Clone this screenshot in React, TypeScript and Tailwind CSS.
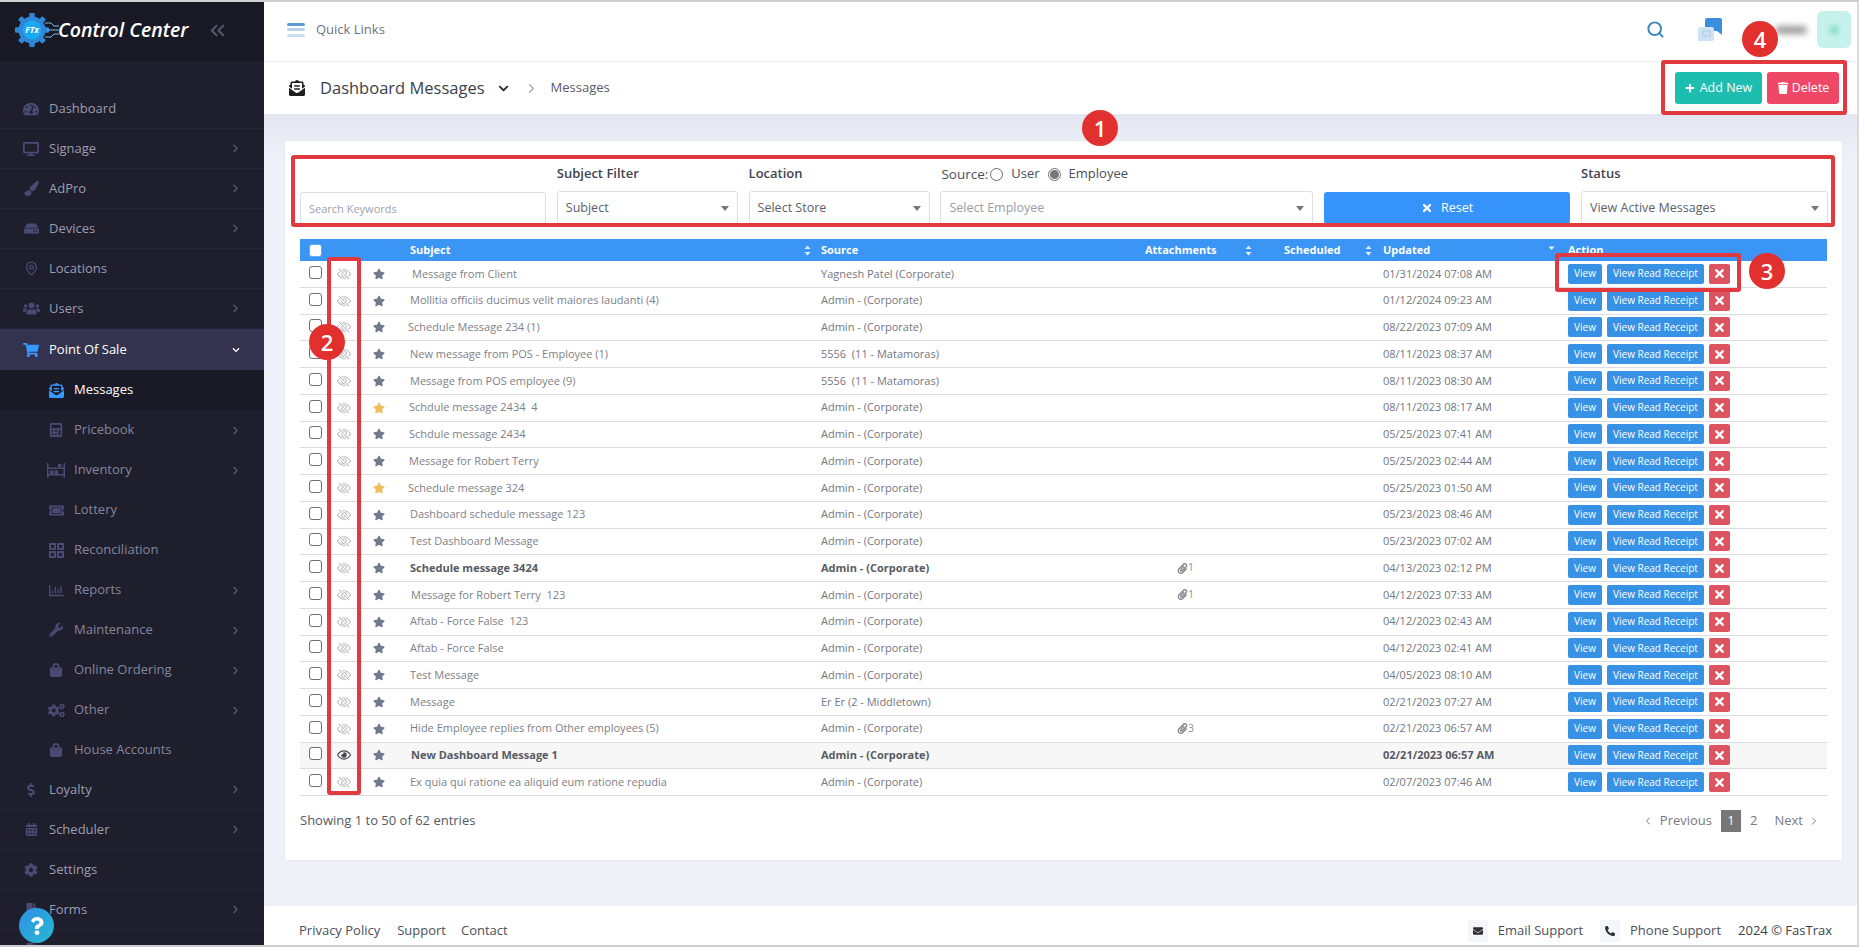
import React from "react";
import {
  FaTachometerAlt, FaDesktop, FaPaintBrush, FaHdd, FaUsers, FaShoppingCart, FaEnvelopeOpenText, FaCalculator,
  FaTicketAlt, FaWrench, FaShoppingBag, FaCogs, FaDollarSign, FaCalendarAlt, FaCog, FaFile, FaStar,
  FaRegEye, FaPaperclip, FaPlus, FaTrash, FaTimes, FaEnvelope, FaPhone, FaChevronDown, FaRegChartBar, FaQuestion,
} from "react-icons/fa";
import { BsEyeSlash } from "react-icons/bs";
import { ChevronRight, ChevronLeft, ChevronsLeft, MapPin, Search } from "lucide-react";

const font = "font-['Open_Sans','Noto_Sans',sans-serif]";

function Logo() {
  const teeth = [0, 45, 90, 135, 180, 225, 270, 315];
  return (
    <svg width="44" height="34" viewBox="0 0 44 34" className="shrink-0">
      <g fill="#2f86d6">
        {teeth.map((a) => (
          <rect key={a} x="14.5" y="0" width="5" height="34" rx="1" transform={`rotate(${a} 17 17)`} />
        ))}
        <circle cx="17" cy="17" r="13.5" />
      </g>
      <circle cx="17" cy="17" r="9.5" fill="#19a9f1" />
      <text x="17" y="20" textAnchor="middle" fontSize="8.5" fontWeight="700" fontStyle="italic" fill="#fff" fontFamily="Open Sans">FTx</text>
      <g stroke="#79bfe9" strokeWidth="1" fill="none">
        <path d="M30 10h6l3 3h5M32 17h12M30 24h6l3-3h5" />
      </g>
    </svg>
  );
}

function RackIcon() {
  return (
    <svg width="18" height="15" viewBox="0 0 18 15" fill="currentColor">
      <rect x="0" y="0" width="1.5" height="15" />
      <rect x="16.5" y="0" width="1.5" height="15" />
      <rect x="0" y="4.5" width="18" height="1.5" />
      <rect x="0" y="11" width="18" height="1.5" />
      <rect x="11" y="1" width="3.5" height="3.5" />
      <rect x="3" y="7.5" width="3.5" height="3.5" />
      <rect x="7.5" y="7.5" width="3.5" height="3.5" />
    </svg>
  );
}

function GridIcon() {
  return (
    <svg width="15" height="15" viewBox="0 0 15 15" fill="none" stroke="currentColor" strokeWidth="2">
      <rect x="1" y="1" width="5" height="5" />
      <rect x="9" y="1" width="5" height="5" />
      <rect x="1" y="9" width="5" height="5" />
      <rect x="9" y="9" width="5" height="5" />
    </svg>
  );
}

function TopItem({ icon, label, arrow = true }: { icon: React.ReactNode; label: string; arrow?: boolean }) {
  return (
    <div className="flex h-10 shrink-0 items-center border-b border-[#25253a]">
      <span className="flex w-[49px] shrink-0 justify-center pl-[13px] text-[#494b74]">{icon}</span>
      <span className="text-[13px] text-[#9c9db2]">{label}</span>
      {arrow && <ChevronRight size={13} className="ml-auto mr-[22px] text-[#5c5c72]" />}
    </div>
  );
}

function SubItem({ icon, label, arrow = true }: { icon: React.ReactNode; label: string; arrow?: boolean }) {
  return (
    <div className="flex h-10 shrink-0 items-center">
      <span className="flex w-[74px] shrink-0 justify-center pl-[38px] text-[#494b74]">{icon}</span>
      <span className="text-[13px] text-[#85869c]">{label}</span>
      {arrow && <ChevronRight size={13} className="ml-auto mr-[22px] text-[#5c5c72]" />}
    </div>
  );
}

function Sidebar() {
  return (
    <aside className="flex w-[264px] shrink-0 flex-col overflow-hidden bg-[#1e1e2d]">
      <div className="flex h-[59px] shrink-0 items-center bg-[#191925] pb-[3px] pl-[15px]">
        <Logo />
        <span className="-ml-[1px] text-[19.5px] font-semibold italic text-white">Control Center</span>
        <ChevronsLeft size={23} strokeWidth={2.2} className="ml-[18px] text-[#54546c]" />
      </div>
      <div className="h-7 shrink-0" />
      <TopItem icon={<FaTachometerAlt size={16} />} label="Dashboard" arrow={false} />
      <TopItem icon={<FaDesktop size={16} />} label="Signage" />
      <TopItem icon={<FaPaintBrush size={15} />} label="AdPro" />
      <TopItem icon={<FaHdd size={15} />} label="Devices" />
      <TopItem icon={<MapPin size={15} />} label="Locations" arrow={false} />
      <TopItem icon={<FaUsers size={17} />} label="Users" />
      <div className="flex h-[41px] shrink-0 items-center bg-[#33334f]">
        <span className="flex w-[49px] shrink-0 justify-center pl-[13px] text-[#3699ff]"><FaShoppingCart size={16} /></span>
        <span className="text-[13px] font-medium text-white">Point Of Sale</span>
        <FaChevronDown size={8} className="ml-auto mr-[24px] text-white" />
      </div>
      <div className="flex h-10 shrink-0 items-center bg-[#1a1a27]">
        <span className="flex w-[74px] shrink-0 justify-center pl-[38px] text-[#3699ff]"><FaEnvelopeOpenText size={15} /></span>
        <span className="text-[13px] font-medium text-white">Messages</span>
      </div>
      <SubItem icon={<FaCalculator size={14} />} label="Pricebook" />
      <SubItem icon={<RackIcon />} label="Inventory" />
      <SubItem icon={<FaTicketAlt size={15} />} label="Lottery" arrow={false} />
      <SubItem icon={<GridIcon />} label="Reconciliation" arrow={false} />
      <SubItem icon={<FaRegChartBar size={15} />} label="Reports" />
      <SubItem icon={<FaWrench size={14} />} label="Maintenance" />
      <SubItem icon={<FaShoppingBag size={14} />} label="Online Ordering" />
      <SubItem icon={<FaCogs size={17} />} label="Other" />
      <SubItem icon={<FaShoppingBag size={14} />} label="House Accounts" arrow={false} />
      <TopItem icon={<FaDollarSign size={14} />} label="Loyalty" />
      <TopItem icon={<FaCalendarAlt size={13} />} label="Scheduler" />
      <TopItem icon={<FaCog size={14} />} label="Settings" arrow={false} />
      <TopItem icon={<FaFile size={13} />} label="Forms" />
      <TopItem icon={<FaFile size={13} />} label="" />
    </aside>
  );
}

function ChatIcon() {
  return (
    <svg width="25" height="24" viewBox="0 0 25 24">
      <path d="M7 2a2 2 0 0 1 2-2h13a2 2 0 0 1 2 2v15l-5-4H9a2 2 0 0 1-2-2z" fill="#3a8fe0" />
      <path d="M0 11a2 2 0 0 1 2-2h12a2 2 0 0 1 2 2v10a2 2 0 0 1-2 2H1l-1 0z" fill="#cfe3f5" />
      <rect x="5" y="13" width="7" height="5" fill="none" stroke="#a9c9e6" />
    </svg>
  );
}

function TopBar() {
  return (
    <header className="flex h-[60px] shrink-0 items-center border-b border-[#eceef3] bg-white pb-[4px] pl-[23px]">
      <div className="flex w-[18px] flex-col gap-[2.5px]">
        <span className="h-[3px] rounded-sm bg-[#5b9bd0]" />
        <span className="h-[3px] rounded-sm bg-[#b6d5e8]" />
        <span className="h-[3px] rounded-sm bg-[#c9e0ee]" />
      </div>
      <span className="ml-[11px] text-[13px] text-[#6c7283]">Quick Links</span>
      <Search size={19} strokeWidth={2.5} className="ml-auto mr-[1px] text-[#3f87bd]" />
      <span className="ml-[32px]"><ChatIcon /></span>
      <span className="ml-[52px] h-[8px] w-[32px] rounded bg-[#9b9b9b] blur-[3px]" />
      <span className="ml-[10px] mr-[6px] flex h-[37px] w-[34px] items-center justify-center rounded-md bg-[#c5f2ea]">
        <span className="h-[10px] w-[10px] rounded-full bg-[#8fe0d2] blur-[2px]" />
      </span>
    </header>
  );
}

function Breadcrumb() {
  return (
    <div className="flex h-[52px] shrink-0 items-center bg-white pl-[25px] pr-[18px]">
      <FaEnvelopeOpenText size={16} className="text-[#1f1f1f]" />
      <span className="ml-[15px] text-[16.5px] text-[#3a3f4b]">Dashboard Messages</span>
      <FaChevronDown size={11} className="ml-[13px] text-[#26282e]" />
      <ChevronRight size={15} className="ml-[15px] text-[#a4a6ad]" />
      <span className="ml-[12px] text-[13px] text-[#565b66]">Messages</span>
      <button className="ml-auto flex h-8 w-[87px] items-center justify-center gap-[5px] rounded-[3px] bg-[#1dbdb0] text-[12.5px] text-white">
        <FaPlus size={10} /> Add New
      </button>
      <button className="ml-[5px] flex h-8 w-[72px] items-center justify-center gap-[3px] rounded-[3px] bg-[#ef4867] text-[12.5px] text-white">
        <FaTrash size={12} /> Delete
      </button>
    </div>
  );
}

function Caret() {
  return <span className="ml-auto h-0 w-0 border-x-[4px] border-t-[5px] border-x-transparent border-t-[#777]" />;
}

function FakeSelect({ text, muted = false }: { text: string; muted?: boolean }) {
  return (
    <div className="flex h-[33px] items-center rounded-[3px] border border-[#dfdfe3] bg-white pl-2 pr-2 pt-[1px] text-[12.5px]">
      <span className={muted ? "text-[#9a9ca6]" : "text-[#5c606b]"}>{text}</span>
      <Caret />
    </div>
  );
}

function Radio({ checked }: { checked?: boolean }) {
  return (
    <span className="flex h-[13px] w-[13px] items-center justify-center rounded-full border border-[#6c6c6c] bg-white">
      {checked && <span className="h-[9px] w-[9px] rounded-full bg-[#777]" />}
    </span>
  );
}

function Filters() {
  const label = "flex h-5 items-center text-[13px] font-semibold text-[#3f4450]";
  return (
    <div className="grid grid-cols-[246px_181px_181px_373px_246px_247px] gap-x-[10.8px]">
      <div className="flex flex-col gap-[7px]">
        <div className="h-5" />
        <input
          placeholder="Search Keywords"
          className="mt-[1px] h-[32px] rounded-[3px] border border-[#dfdfe3] bg-white pl-2 pt-[1px] text-[11px] outline-none placeholder:text-[#9fa1aa]"
        />
      </div>
      <div className="flex flex-col gap-[7px]">
        <div className={label}>Subject Filter</div>
        <FakeSelect text="Subject" />
      </div>
      <div className="flex flex-col gap-[7px]">
        <div className={label}>Location</div>
        <FakeSelect text="Select Store" />
      </div>
      <div className="flex flex-col gap-[7px]">
        <div className="flex h-5 items-center pl-[1px] text-[13px] text-[#4a4e59]">
          <span className="text-[13.5px]">Source:</span>
          <span className="ml-[2px]"><Radio /></span>
          <span className="ml-[8px]">User</span>
          <span className="ml-[8px]"><Radio checked /></span>
          <span className="ml-[8px]">Employee</span>
        </div>
        <FakeSelect text="Select Employee" muted />
      </div>
      <div className="flex flex-col gap-[7px]">
        <div className="h-5" />
        <button className="mt-[1px] flex h-[32px] items-center justify-center gap-[8px] rounded-[3px] bg-[#3693fb] text-[12.5px] text-white">
          <FaTimes size={12} /> Reset
        </button>
      </div>
      <div className="flex flex-col gap-[7px]">
        <div className={label}>Status</div>
        <FakeSelect text="View Active Messages" />
      </div>
    </div>
  );
}

function Sort({ only = false }: { only?: boolean }) {
  return (
    <svg width="7" height="11" viewBox="0 0 7 11" className="shrink-0">
      {only ? (
        <path d="M3.5 5 6.5 1.5h-6z" fill="#e9f3fe" />
      ) : (
        <>
          <path d="M3.5 0.5 6.5 4h-6z" fill="#d9ebfd" />
          <path d="M3.5 10.5 6.5 7h-6z" fill="#e9f3fe" />
        </>
      )}
    </svg>
  );
}

const cols = "grid grid-cols-[37px_35px_38px_411px_324px_139px_99px_185px_260px] items-center";

function TableHead() {
  const th = "flex items-center text-[11px] font-bold text-white";
  return (
    <div className={`${cols} h-[22px] bg-[#3a95f5]`}>
      <div className="pl-[9px]">
        <input type="checkbox" className="block h-[13px] w-[13px] appearance-none rounded-[3px] border border-[#6aa9ee] bg-white" />
      </div>
      <div />
      <div />
      <div className={`${th} pr-[10px]`}>Subject<span className="ml-auto"><Sort /></span></div>
      <div className={th}>Source</div>
      <div className={`${th} pr-[32px]`}>Attachments<span className="ml-auto"><Sort /></span></div>
      <div className={`${th} pr-[11px]`}>Scheduled<span className="ml-auto"><Sort /></span></div>
      <div className={`${th} pr-[13px]`}>Updated<span className="ml-auto"><Sort only /></span></div>
      <div className={th}>Action</div>
    </div>
  );
}

type Row = {
  s: string; src: string; d: string; off?: string; gold?: boolean; bold?: boolean; clip?: number; seen?: boolean; wash?: boolean;
};

const A = "Admin - (Corporate)";
const rows: Row[] = [
  { s: "Message from Client", src: "Yagnesh Patel (Corporate)", d: "01/31/2024 07:08 AM", off: "ml-[2px]" },
  { s: "Mollitia officiis ducimus velit maiores laudanti (4)", src: A, d: "01/12/2024 09:23 AM" },
  { s: "Schedule Message 234 (1)", src: A, d: "08/22/2023 07:09 AM", off: "-ml-[2px]" },
  { s: "New message from POS - Employee (1)", src: "5556\u00a0 (11 - Matamoras)", d: "08/11/2023 08:37 AM" },
  { s: "Message from POS employee (9)", src: "5556\u00a0 (11 - Matamoras)", d: "08/11/2023 08:30 AM" },
  { s: "Schdule message 2434\u00a0 4", src: A, d: "08/11/2023 08:17 AM", gold: true, off: "-ml-[1px]" },
  { s: "Schdule message 2434", src: A, d: "05/25/2023 07:41 AM", off: "-ml-[1px]" },
  { s: "Message for Robert Terry", src: A, d: "05/25/2023 02:44 AM", off: "-ml-[1px]" },
  { s: "Schedule message 324", src: A, d: "05/25/2023 01:50 AM", gold: true, off: "-ml-[2px]" },
  { s: "Dashboard schedule message 123", src: A, d: "05/23/2023 08:46 AM" },
  { s: "Test Dashboard Message", src: A, d: "05/23/2023 07:02 AM" },
  { s: "Schedule message 3424", src: A, d: "04/13/2023 02:12 PM", bold: true, clip: 1 },
  { s: "Message for Robert Terry\u00a0 123", src: A, d: "04/12/2023 07:33 AM", clip: 1, off: "ml-[1px]" },
  { s: "Aftab - Force False\u00a0 123", src: A, d: "04/12/2023 02:43 AM" },
  { s: "Aftab - Force False", src: A, d: "04/12/2023 02:41 AM" },
  { s: "Test Message", src: A, d: "04/05/2023 08:10 AM" },
  { s: "Message", src: "Er Er (2 - Middletown)", d: "02/21/2023 07:27 AM" },
  { s: "Hide Employee replies from Other employees (5)", src: A, d: "02/21/2023 06:57 AM", clip: 3 },
  { s: "New Dashboard Message 1", src: A, d: "02/21/2023 06:57 AM", bold: true, seen: true, wash: true, off: "ml-[1px]" },
  { s: "Ex quia qui ratione ea aliquid eum ratione repudia", src: A, d: "02/07/2023 07:46 AM" },
];

function TableRow({ r }: { r: Row }) {
  const strong = r.bold ? "font-bold text-[#575a63]" : "text-[#7e8089]";
  return (
    <div className={`${cols} h-[26.75px] border-b border-[#dcdde1] ${r.wash ? "bg-[#f7f7f7]" : "bg-white"} text-[11px]`}>
      <div className="-mt-[3px] pl-[9px]">
        <input type="checkbox" className="block h-[13px] w-[13px] appearance-none rounded-[3px] border border-[#6e6e6e] bg-white" />
      </div>
      <div>
        {r.seen ? <FaRegEye size={14} className="text-[#454850]" /> : <BsEyeSlash size={14} className="text-[#aeb0b6]" />}
      </div>
      <div className="pl-[1px]">
        <FaStar size={12} className={r.gold ? "text-[#efbd5d]" : "text-[#707a8c]"} />
      </div>
      <div className={`${strong} ${r.off ?? ""}`}>{r.s}</div>
      <div className={r.bold ? "font-bold text-[#575a63]" : "text-[#74767f]"}>{r.src}</div>
      <div className="flex items-center pl-[32px] text-[10.5px] text-[#8d8f97]">
        {r.clip && (
          <>
            <FaPaperclip size={11} className="text-[#85878f]" />
            {r.clip}
          </>
        )}
      </div>
      <div />
      <div className={r.wash ? "font-bold text-[#575a63]" : "text-[#74767f]"}>{r.d}</div>
      <div className="flex items-center gap-[5px] text-[10px] text-white">
        <button className="flex h-[20px] w-[34px] items-center justify-center rounded-[2px] bg-[#3792e6]">View</button>
        <button className="flex h-[20px] w-[97px] items-center justify-center rounded-[2px] bg-[#3792e6]">View Read Receipt</button>
        <button className="flex h-[20px] w-[21px] items-center justify-center rounded-[2px] bg-[#dd5461]"><FaTimes size={13} /></button>
      </div>
    </div>
  );
}

function Pager() {
  return (
    <div className="mt-[13px] flex h-[24px] items-center text-[13px]">
      <span className="text-[#555963]">Showing 1 to 50 of 62 entries</span>
      <div className="ml-auto flex items-center pr-[7px] text-[#777a84]">
        <ChevronLeft size={12} />
        <span className="ml-[6px]">Previous</span>
        <span className="ml-[9px] flex h-[22px] w-[20px] items-center justify-center bg-[#777] text-white">1</span>
        <span className="ml-[9px]">2</span>
        <span className="ml-[17px]">Next</span>
        <ChevronRight size={12} className="ml-[5px]" />
      </div>
    </div>
  );
}

function Footer() {
  return (
    <footer className="flex h-[39px] shrink-0 items-center bg-white pl-[35px] pr-[25px] pt-[11px] text-[13px] text-[#4b4f5a]">
      <span>Privacy Policy</span>
      <span className="ml-[17px]">Support</span>
      <span className="ml-[15px]">Contact</span>
      <span className="ml-auto flex h-[22px] w-[20px] items-center justify-center bg-[#f5f6f9]"><FaEnvelope size={10} className="text-[#2d2f36]" /></span>
      <span className="ml-[10px]">Email Support</span>
      <span className="ml-[17px] flex h-[22px] w-[20px] items-center justify-center bg-[#f5f6f9]"><FaPhone size={10} className="scale-x-[-1] text-[#2d2f36]" /></span>
      <span className="ml-[10px]">Phone Support</span>
      <span className="ml-[17px] text-[#3b3f49]">2024 © FasTrax</span>
    </footer>
  );
}

function Badge({ n, pos }: { n: string; pos: string }) {
  return (
    <span className={`absolute flex h-[36px] w-[36px] items-center justify-center rounded-full bg-[#e2302f] text-[22px] font-semibold text-white ${pos}`}>
      {n}
    </span>
  );
}

export default function App() {
  const red = "absolute rounded-[3px] border-[4px] border-[#e0393f]";
  return (
    <div className={`relative flex h-[947px] w-[1859px] flex-col overflow-hidden bg-white ${font}`}>
      <div className="h-[2px] shrink-0 bg-[#cfcfd2]" />
      <div className="flex min-h-0 flex-1">
        <Sidebar />
        <main className="flex min-w-0 flex-1 flex-col border-r-2 border-[#d8dae0]">
          <TopBar />
          <Breadcrumb />
          <div className="flex min-h-0 flex-1 flex-col bg-[linear-gradient(#e4e7f2,#eef1f8_50px)] pl-[20px] pr-[14px] pt-[26px]">
            <section className="h-[721px] rounded-[3px] border border-[#e9ebf1] bg-white px-[15px] pt-[23px]">
              <Filters />
              <div className="mt-[15px]">
                <TableHead />
                {rows.map((r) => (
                  <TableRow key={r.s + r.d} r={r} />
                ))}
              </div>
              <Pager />
            </section>
          </div>
          <Footer />
        </main>
      </div>
      <div className="h-[2px] shrink-0 bg-[#cfcfd2]" />

      <div className={`${red} left-[291px] top-[155px] h-[72px] w-[1544px]`} />
      <div className={`${red} left-[327px] top-[257px] h-[538px] w-[34px]`} />
      <div className={`${red} left-[1555px] top-[253px] h-[39px] w-[186px]`} />
      <div className={`${red} left-[1661px] top-[60px] h-[55px] w-[186px]`} />
      <Badge n="1" pos="left-[1082px] top-[110px]" />
      <Badge n="2" pos="left-[309px] top-[324px]" />
      <Badge n="3" pos="left-[1749px] top-[253px]" />
      <Badge n="4" pos="left-[1742px] top-[21px]" />

      <span className="absolute left-[19px] top-[908px] flex h-[35px] w-[35px] items-center justify-center rounded-full bg-gradient-to-br from-[#2f8fe6] to-[#27b9cf] text-white">
        <FaQuestion size={18} />
      </span>
    </div>
  );
}
